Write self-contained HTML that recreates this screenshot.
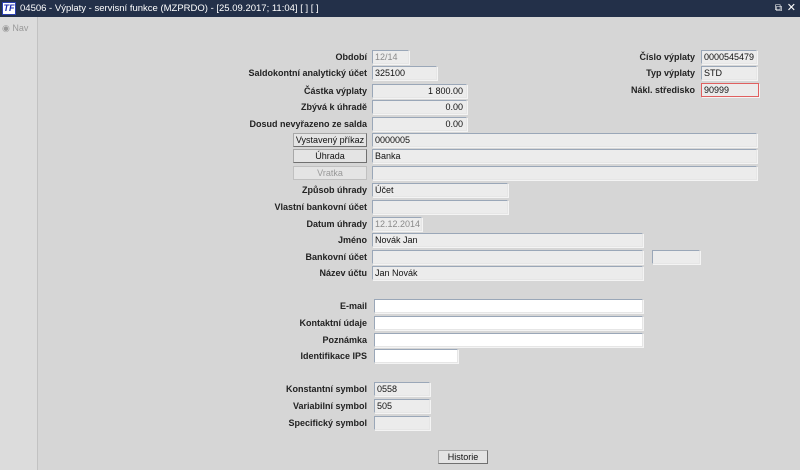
<!DOCTYPE html>
<html><head><meta charset="utf-8"><style>
*{margin:0;padding:0;box-sizing:border-box}
body{width:800px;height:470px;background:#d6d6d6;font-family:"Liberation Sans",Arial,sans-serif;position:relative;overflow:hidden}
#tb{position:absolute;left:0;top:0;width:800px;height:17px;background:#233049;color:#fff;font-size:9.5px;line-height:17px}
#tb .t{position:absolute;left:20px;top:0}
#logo{position:absolute;left:2px;top:2px;width:14px;height:13px;background:#fff;border:1px solid #2b3fb0;color:#1a2bb0;font:bold italic 9px/11px "Liberation Sans",sans-serif;text-align:center}
#side{position:absolute;left:0;top:17px;width:38px;height:453px;background:#dcdcdc;border-right:1px solid #c2c2c2}
#side span{position:absolute;left:2px;top:6px;font-size:9px;color:#999}
.l{position:absolute;font-size:9px;font-weight:bold;color:#222;text-align:right;line-height:14px}
.i{position:absolute;height:14px;background:#ececec;border:1px solid #9aa7b8;border-right-color:#e6e6e6;border-bottom-color:#e6e6e6;box-shadow:1px 1px 0 #f4f4f4;font-size:9px;line-height:12px;padding-left:2px;color:#111;white-space:nowrap;overflow:hidden}
.w{background:#fff}
.r{text-align:right;padding-right:3px}
.g{color:#8a8a8a}
.b{position:absolute;height:14px;background:#e4e4e4;border:1px solid #a8a8a8;border-right-color:#707070;border-bottom-color:#707070;font-size:9px;line-height:12px;text-align:center;color:#111}
</style></head><body>
<div id="tb"><div id="logo">TF</div><span class="t">04506 - Výplaty - servisní funkce (MZPRDO) - [25.09.2017; 11:04] [ ] [ ]</span><span style="position:absolute;right:18px;top:0;font-size:10px">⧉</span><span style="position:absolute;right:4px;top:0;font-size:11px">✕</span></div>
<div id="side"><span>◉ Nav</span></div>

<div class="l" style="right:433px;top:50px">Období</div><div class="i g" style="left:372px;top:50px;width:37px">12/14</div>
<div class="l" style="right:433px;top:66px">Saldokontní analytický účet</div><div class="i" style="left:372px;top:66px;width:65px">325100</div>
<div class="l" style="right:433px;top:84px">Částka výplaty</div><div class="i r" style="left:372px;top:84px;width:95px">1 800.00</div>
<div class="l" style="right:433px;top:100px">Zbývá k úhradě</div><div class="i r" style="left:372px;top:100px;width:95px">0.00</div>
<div class="l" style="right:433px;top:117px">Dosud nevyřazeno ze salda</div><div class="i r" style="left:372px;top:117px;width:95px">0.00</div>

<div class="l" style="right:105px;top:50px">Číslo výplaty</div><div class="i" style="left:701px;top:50px;width:56px">0000545479</div>
<div class="l" style="right:105px;top:66px">Typ výplaty</div><div class="i" style="left:701px;top:66px;width:56px">STD</div>
<div class="l" style="right:105px;top:83px">Nákl. středisko</div><div class="i" style="left:701px;top:83px;width:58px;border:1px solid #e06060">90999</div>

<div class="b" style="left:293px;top:133px;width:74px">Vystavený příkaz</div><div class="i" style="left:372px;top:133px;width:385px">0000005</div>
<div class="b" style="left:293px;top:149px;width:74px">Úhrada</div><div class="i" style="left:372px;top:149px;width:385px">Banka</div>
<div class="b" style="left:293px;top:166px;width:74px;color:#999;border-color:#c0c0c0">Vratka</div><div class="i" style="left:372px;top:166px;width:385px"></div>
<div class="l" style="right:433px;top:183px">Způsob úhrady</div><div class="i" style="left:372px;top:183px;width:136px">Účet</div>
<div class="l" style="right:433px;top:200px">Vlastní bankovní účet</div><div class="i" style="left:372px;top:200px;width:136px"></div>
<div class="l" style="right:433px;top:217px">Datum úhrady</div><div class="i g" style="left:372px;top:217px;width:50px">12.12.2014</div>
<div class="l" style="right:433px;top:233px">Jméno</div><div class="i" style="left:372px;top:233px;width:271px">Novák Jan</div>
<div class="l" style="right:433px;top:250px">Bankovní účet</div><div class="i" style="left:372px;top:250px;width:271px"></div><div class="i" style="left:652px;top:250px;width:48px"></div>
<div class="l" style="right:433px;top:266px">Název účtu</div><div class="i" style="left:372px;top:266px;width:271px">Jan Novák</div>

<div class="l" style="right:433px;top:299px">E-mail</div><div class="i w" style="left:374px;top:299px;width:269px"></div>
<div class="l" style="right:433px;top:316px">Kontaktní údaje</div><div class="i w" style="left:374px;top:316px;width:269px"></div>
<div class="l" style="right:433px;top:333px">Poznámka</div><div class="i w" style="left:374px;top:333px;width:269px"></div>
<div class="l" style="right:433px;top:349px">Identifikace IPS</div><div class="i w" style="left:374px;top:349px;width:84px"></div>

<div class="l" style="right:433px;top:382px">Konstantní symbol</div><div class="i" style="left:374px;top:382px;width:56px">0558</div>
<div class="l" style="right:433px;top:399px">Variabilní symbol</div><div class="i" style="left:374px;top:399px;width:56px">505</div>
<div class="l" style="right:433px;top:416px">Specifický symbol</div><div class="i" style="left:374px;top:416px;width:56px"></div>

<div class="b" style="left:438px;top:450px;width:50px">Historie</div>
</body></html>
